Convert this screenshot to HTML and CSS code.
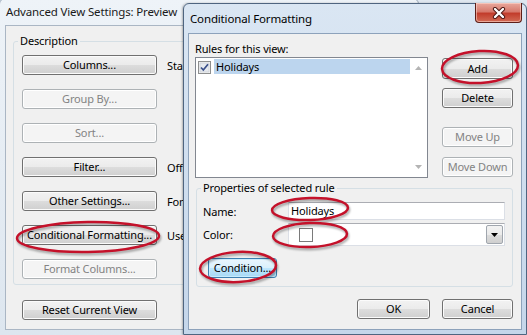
FILE: index.html
```html
<!DOCTYPE html>
<html>
<head>
<meta charset="utf-8">
<link rel="stylesheet" href="styles.css">
</head>
<body>
<div class="win back">
  <div class="title">Advanced View Settings: Preview</div>
  <div class="client">
    <fieldset class="group desc">
      <legend>Description</legend>
      <div class="rows">
        <div class="row"><button class="btn wide">Columns...</button><span class="side">Start Date, Due Date, Subject, Categories</span></div>
        <div class="row"><button class="btn wide dis">Group By...</button><span class="side"></span></div>
        <div class="row"><button class="btn wide dis">Sort...</button><span class="side"></span></div>
        <div class="row"><button class="btn wide">Filter...</button><span class="side">Off</span></div>
        <div class="row"><button class="btn wide">Other Settings...</button><span class="side">Fonts and other Table View settings</span></div>
        <div class="row"><button class="btn wide">Conditional Formatting...</button><span class="side">User defined fonts on each message</span></div>
        <div class="row"><button class="btn wide dis">Format Columns...</button><span class="side"></span></div>
      </div>
    </fieldset>
    <button class="btn wide reset">Reset Current View</button>
  </div>
</div>

<div class="win front">
  <div class="title">Conditional Formatting</div>
  <div class="close">
    <svg width="14" height="12" viewBox="0 0 14 12"><path d="M3 2 L11 10 M11 2 L3 10" stroke="#4a1410" stroke-width="4.2" stroke-linecap="round"/><path d="M3 2 L11 10 M11 2 L3 10" stroke="#fff" stroke-width="2.4" stroke-linecap="round"/></svg>
  </div>
  <div class="client fclient">
    <div class="lbl">Rules for this view:</div>
    <div class="toprow">
      <div class="list">
        <div class="items">
          <div class="item">
            <svg class="chk" width="13" height="13" viewBox="0 0 13 13"><rect x="0.5" y="0.5" width="12" height="12" fill="#f4f4f4" stroke="#8e8f8f"/><rect x="2" y="2" width="9" height="9" fill="#e6e9ee" stroke="#c4c8cf" stroke-width="0.6"/><path d="M3 6.5 L5.3 9 L10 3.2" fill="none" stroke="#3a4f8a" stroke-width="1.7"/></svg>
            <span class="sel">Holidays</span>
          </div>
        </div>
        <div class="sbar">
          <svg width="7" height="4" viewBox="0 0 7 4"><path d="M0 4 L3.5 0 L7 4 Z" fill="#b4b4b4"/></svg>
          <svg width="7" height="4" viewBox="0 0 7 4"><path d="M0 0 L3.5 4 L7 0 Z" fill="#b4b4b4"/></svg>
        </div>
      </div>
      <div class="bcol">
        <button class="btn add">Add</button>
        <button class="btn del">Delete</button>
        <button class="btn dis up">Move Up</button>
        <button class="btn dis">Move Down</button>
      </div>
    </div>
    <fieldset class="group props">
      <legend>Properties of selected rule</legend>
      <div class="form">
        <span class="flbl">Name:</span>
        <div class="tb">Holidays</div>
        <span class="flbl">Color:</span>
        <div class="combo">
          <span class="swatch"></span>
          <span class="ddbtn"><svg width="7" height="4" viewBox="0 0 7 4"><path d="M0 0 L3.5 4 L7 0 Z" fill="#000"/></svg></span>
        </div>
      </div>
      <button class="btn focus cond">Condition...</button>
    </fieldset>
    <div class="bottom">
      <button class="btn ok">OK</button>
      <button class="btn cancel">Cancel</button>
    </div>
  </div>
</div>

<svg class="marks" width="527" height="335" viewBox="0 0 527 335">
  <g fill="none" stroke="#c4112a" stroke-width="2.5">
    <ellipse cx="88" cy="237" rx="71" ry="15" transform="rotate(-1 88 237)"/>
    <ellipse cx="480" cy="67" rx="38" ry="16" transform="rotate(-3 480 67)"/>
    <ellipse cx="310" cy="209" rx="38" ry="11" transform="rotate(-2 310 209)"/>
    <ellipse cx="310" cy="235" rx="37" ry="12" transform="rotate(-2 310 235)"/>
    <ellipse cx="238" cy="267" rx="38" ry="15" transform="rotate(-3 238 267)"/>
  </g>
</svg>
</body>
</html>
```
FILE: styles.css
```css
* { box-sizing: border-box; }

body {
  margin: 0;
  width: 527px;
  height: 335px;
  overflow: hidden;
  position: relative;
  background: #dfe7f0;
  font-family: "Noto Sans", "DejaVu Sans", sans-serif;
  font-size: 11px;
  letter-spacing: -0.15px;
  color: #000;
}

.win {
  position: absolute;
  display: flex;
  flex-direction: column;
}

.title {
  font-size: 11.5px;
  white-space: nowrap;
}

.client {
  flex: 1;
  background: #f0f0f0;
  display: flex;
  flex-direction: column;
  align-items: flex-start;
}

/* back window */
.back {
  left: -1px;
  top: -2px;
  width: 420px;
  height: 338px;
  border: 1px solid #9aa8b8;
  border-radius: 6px 6px 0 0;
  background: linear-gradient(#eef3f8, #dde6ef);
  padding: 0 5px 5px 5px;
}

.back .title {
  height: 26px;
  line-height: 25px;
  padding-left: 1px;
  color: #1a1a1a;
}

.back .client {
  border: 1px solid #aab6c4;
  padding: 7px 0 0 7px;
}

.group {
  margin: 0;
  border: 1px solid #d5dfe5;
  border-radius: 3px;
}

.group legend {
  line-height: 16px;
  padding: 0 2px;
}

.desc {
  width: 330px;
  padding: 0 0 5px 8px;
}

.desc legend {
  margin-left: -4px;
}

.rows {
  display: flex;
  flex-direction: column;
  gap: 14px;
  padding-top: 6px;
}

.row {
  display: flex;
  align-items: center;
  gap: 10px;
}

.side {
  white-space: nowrap;
}

/* buttons */
.btn {
  font-family: inherit;
  font-size: 11px;
  letter-spacing: -0.15px;
  color: #000;
  height: 20px;
  padding: 0;
  border: 1px solid #707070;
  border-radius: 3px;
  background: linear-gradient(#f2f2f2 0%, #ebebeb 50%, #dddddd 50%, #cfcfcf 100%);
  box-shadow: inset 0 0 0 1px #fbfbfb;
  line-height: 16px;
}

.btn.dis {
  border-color: #adb2b5;
  background: #f4f4f4;
  color: #838383;
  box-shadow: inset 0 0 0 1px #fff;
}

.btn.focus {
  border-color: #3c7fb1;
  background: linear-gradient(#eaf6fd 0%, #d9f0fc 50%, #bee6fd 50%, #a7d9f5 100%);
  box-shadow: inset 0 0 0 1px #c8ecfd;
}

.wide {
  width: 135px;
}

.reset {
  margin: 15px 0 0 9px;
}

/* front window */
.front {
  left: 183px;
  top: 3px;
  width: 344px;
  height: 332px;
  border: 1px solid #4f6580;
  border-radius: 6px 6px 0 0;
  background: linear-gradient(#dae6f3, #c5d6ea);
  padding: 0 4px 4px 4px;
  box-shadow: -1px 0 2px rgba(0, 0, 0, 0.25);
}

.front .title {
  height: 29px;
  line-height: 29px;
  padding-left: 2px;
}

.close {
  position: absolute;
  right: 4px;
  top: -1px;
  width: 47px;
  height: 20px;
  border: 1px solid #5d1e18;
  border-top: none;
  border-radius: 0 0 4px 4px;
  background: linear-gradient(#e9a89d 0%, #d77a6d 45%, #c23d2c 55%, #d26b55 100%);
  box-shadow: inset 0 0 0 1px rgba(255, 220, 210, 0.55);
  display: flex;
  align-items: center;
  justify-content: center;
}

.fclient {
  border: 1px solid #8da2bb;
  padding: 7px 8px 0 6px;
}

.lbl {
  line-height: 16px;
}

.toprow {
  display: flex;
  gap: 14px;
}

.list {
  width: 233px;
  height: 121px;
  border: 1px solid #828790;
  background: #fff;
  display: flex;
}

.items {
  flex: 1;
  padding: 1px 0 0 2px;
}

.item {
  display: flex;
  align-items: center;
  height: 15px;
}

.chk {
  flex: none;
  margin-top: 2px;
}

.sel {
  flex: 1;
  margin-left: 3px;
  height: 15px;
  line-height: 15px;
  background: #bcd5ee;
  padding-left: 2px;
}

.sbar {
  width: 17px;
  display: flex;
  flex-direction: column;
  justify-content: space-between;
  align-items: center;
  padding: 8px 0 8px;
}

.bcol {
  width: 71px;
  padding-top: 1px;
  display: flex;
  flex-direction: column;
}

.bcol .btn {
  width: 71px;
}

.add {
  height: 21px !important;
}

.del {
  margin-top: 9px;
}

.up {
  margin-top: 19px;
  margin-bottom: 10px;
}

.props {
  margin: 2px 0 0 1px;
  width: 317px;
  padding: 0 7px 8px 6px;
}

.props legend {
  margin-left: -2px;
}

.form {
  display: grid;
  grid-template-columns: 85px 217px;
  grid-template-rows: 18px 23px;
  row-gap: 3px;
  align-items: center;
  padding-top: 6px;
}

.tb {
  height: 18px;
  border: 1px solid #dbdfe6;
  border-top-color: #abadb3;
  background: #fff;
  line-height: 16px;
  padding-left: 2px;
}

.combo {
  height: 23px;
  border: 1px solid #dbdfe6;
  border-top-color: #abadb3;
  background: #fff;
  display: flex;
  align-items: center;
  justify-content: space-between;
  padding: 1px;
}

.swatch {
  width: 14px;
  height: 14px;
  border: 1px solid #7a7a7a;
  background: #fff;
  margin-left: 9px;
}

.ddbtn {
  width: 17px;
  height: 19px;
  border: 1px solid #a0a6ae;
  border-radius: 2px;
  background: linear-gradient(#f2f2f2 0%, #ebebeb 50%, #dddddd 50%, #cfcfcf 100%);
  display: flex;
  align-items: center;
  justify-content: center;
}

.cond {
  width: 69px;
  margin: 12px 0 0 5px;
}

.bottom {
  align-self: stretch;
  display: flex;
  justify-content: flex-end;
  gap: 12px;
  margin-top: 12px;
}

.ok {
  width: 73px;
}

.cancel {
  width: 71px;
}

.marks {
  position: absolute;
  left: 0;
  top: 0;
  pointer-events: none;
  filter: drop-shadow(1px 2px 1px rgba(0, 0, 0, 0.35));
}
```
